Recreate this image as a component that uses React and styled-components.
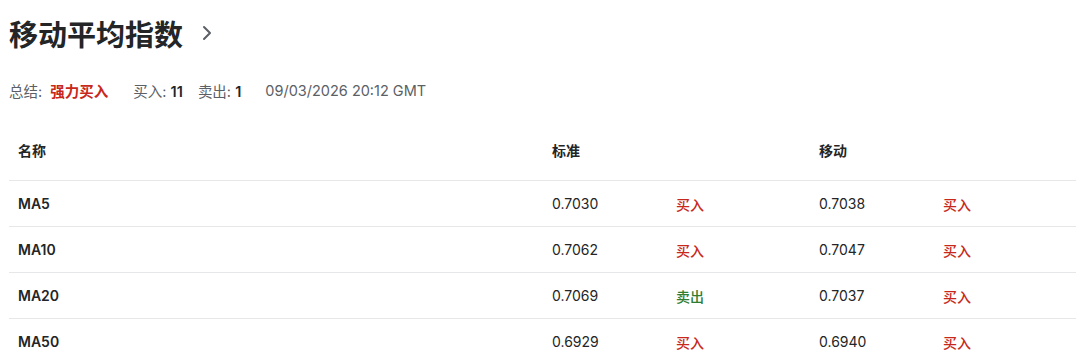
import React from 'react'
import styled, { createGlobalStyle } from 'styled-components'

const GlobalStyle = createGlobalStyle`
  body {
    margin: 0;
    background: #fff;
    font-family: Inter, "Noto Sans CJK SC", sans-serif;
    color: #232526;
  }
`

const Page = styled.div`
  padding: 13px 4px 0 9px;
`

const TitleRow = styled.h2`
  display: flex;
  align-items: center;
  gap: 17px;
  margin: 0;
  height: 40px;
  font-size: 29px;
  font-weight: 700;
  color: #232526;
`

const Chevron = () => (
  <svg width="14" height="20" viewBox="0 0 14 20" fill="none">
    <path d="M4 4l6 6-6 6" stroke="#5b5f66" strokeWidth="2" strokeLinecap="round" strokeLinejoin="round" />
  </svg>
)

const Summary = styled.div`
  display: flex;
  align-items: center;
  height: 20px;
  margin-top: 27px;
  font-size: 14.5px;
  color: #5b5f66;
`

const Item = styled.span`
  margin-right: ${p => p.$gap || 0}px;
  white-space: pre;
`

const Strong = styled.span`
  font-weight: 600;
  color: ${p => (p.$red ? '#c8281b' : '#232526')};
`

const Table = styled.div`
  margin-top: 20px;
  font-size: 14px;
`

const Row = styled.div`
  display: grid;
  grid-template-columns: 534px 124px 143px 124px 1fr;
  align-items: center;
  height: ${p => (p.$head ? 60 : 45)}px;
  border-bottom: 1px solid #e6e7e8;
`

const Cell = styled.div`
  padding-left: 9px;
  font-weight: ${p => (p.$bold ? 600 : 400)};
  color: #232526;
`

const Signal = styled.div`
  padding-left: 9px;
  font-weight: 500;
  color: ${p => (p.$sell ? '#2f7d32' : '#c8281b')};
`

const rows = [
  ['MA5', '0.7030', '买入', '0.7038', '买入'],
  ['MA10', '0.7062', '买入', '0.7047', '买入'],
  ['MA20', '0.7069', '卖出', '0.7037', '买入'],
  ['MA50', '0.6929', '买入', '0.6940', '买入'],
]

export default function App() {
  return (
    <Page>
      <GlobalStyle />
      <TitleRow>
        移动平均指数
        <Chevron />
      </TitleRow>
      <Summary>
        <Item $gap={25}>
          总结:  <Strong $red>强力买入</Strong>
        </Item>
        <Item $gap={15}>
          买入: <Strong>11</Strong>
        </Item>
        <Item $gap={24}>
          卖出: <Strong>1</Strong>
        </Item>
        <Item>09/03/2026 20:12 GMT</Item>
      </Summary>
      <Table>
        <Row $head>
          <Cell $bold>名称</Cell>
          <Cell $bold>标准</Cell>
          <Cell />
          <Cell $bold>移动</Cell>
          <Cell />
        </Row>
        {rows.map(r => (
          <Row key={r[0]}>
            <Cell $bold>{r[0]}</Cell>
            <Cell>{r[1]}</Cell>
            <Signal $sell={r[2] === '卖出'}>{r[2]}</Signal>
            <Cell>{r[3]}</Cell>
            <Signal $sell={r[4] === '卖出'}>{r[4]}</Signal>
          </Row>
        ))}
      </Table>
    </Page>
  )
}
